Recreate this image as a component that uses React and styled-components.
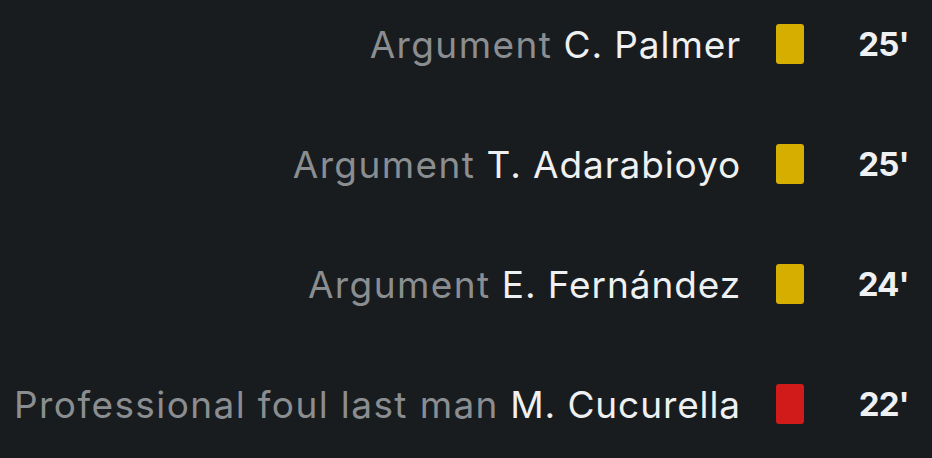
import React from 'react'
import styled, { createGlobalStyle } from 'styled-components'

const GlobalStyle = createGlobalStyle`
  html, body {
    margin: 0;
    padding: 0;
    background: #181c1f;
  }
  body {
    font-family: Inter, "Liberation Sans", sans-serif;
  }
`

const List = styled.div`
  display: flex;
  flex-direction: column;
  gap: 40px;
  padding: 4px 23px 0 0;
  width: 932px;
  height: 458px;
  box-sizing: border-box;
  overflow: hidden;
`

const Row = styled.div`
  display: flex;
  align-items: center;
  justify-content: flex-end;
  height: 80px;
`

const Label = styled.div`
  font-size: 37px;
  white-space: nowrap;
  color: #eef0f2;
  letter-spacing: 0.9px;
`

const Reason = styled.span`
  color: #8b8e91;
  letter-spacing: 1.4px;
`

const Card = styled.div`
  width: 28px;
  height: 40px;
  border-radius: 3px;
  margin: 0 0 0 35px;
  background: ${p => (p.red ? '#d11a1a' : '#d6ae00')};
  flex: none;
`

const Minute = styled.div`
  width: 60px;
  margin-left: 45px;
  text-align: right;
  font-size: 33px;
  font-weight: 700;
  letter-spacing: -0.8px;
  color: #eef0f2;
`

const events = [
  { reason: 'Argument', player: 'C. Palmer', minute: "25'" },
  { reason: 'Argument', player: 'T. Adarabioyo', minute: "25'" },
  { reason: 'Argument', player: 'E. Fernández', minute: "24'" },
  { reason: 'Professional foul last man', player: 'M. Cucurella', minute: "22'", red: true },
]

export default function App() {
  return (
    <>
      <GlobalStyle />
      <List>
        {events.map((e, i) => (
          <Row key={i}>
            <Label>
              <Reason>{e.reason}</Reason>{' '}
              {e.player}
            </Label>
            <Card red={e.red} />
            <Minute>{e.minute}</Minute>
          </Row>
        ))}
      </List>
    </>
  )
}
